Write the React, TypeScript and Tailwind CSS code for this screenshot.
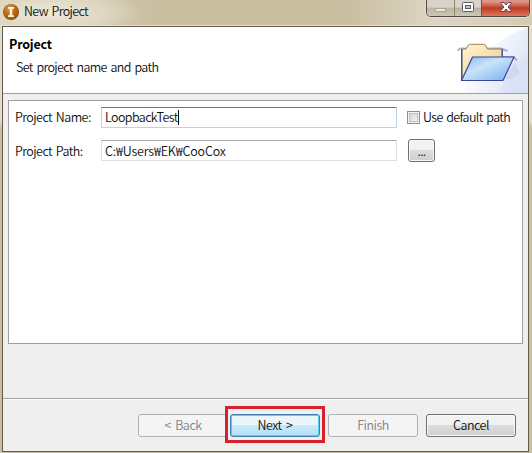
import type { ReactNode } from "react";

const font = "font-['Noto_Sans_CJK_KR','Noto_Sans',sans-serif] font-[350]";

function AppIcon() {
  return (
    <svg width="18" height="18" viewBox="0 0 18 18">
      <defs>
        <radialGradient id="orb" cx="40%" cy="30%" r="75%">
          <stop offset="0" stopColor="#d39a58" />
          <stop offset=".5" stopColor="#b96818" />
          <stop offset="1" stopColor="#8d4a0c" />
        </radialGradient>
      </defs>
      <circle cx="9" cy="9" r="8.1" fill="url(#orb)" />
      <path d="M6 4h6v1.8h-1.7v6.4H12V14H6v-1.8h1.7V5.8H6z" fill="#fff3d2" />
    </svg>
  );
}

function Folder() {
  return (
    <svg width="74" height="66" viewBox="454 27 74 66">
      <defs>
        <linearGradient id="sky" x1="0" y1="0" x2="1" y2="0.6">
          <stop offset="0" stopColor="#fff" />
          <stop offset=".5" stopColor="#f6f8fe" />
          <stop offset="1" stopColor="#dce3f8" />
        </linearGradient>
        <linearGradient id="flap" x1="0" y1="0" x2="1" y2="1">
          <stop offset="0" stopColor="#81b7ef" />
          <stop offset=".4" stopColor="#c9e3fa" />
          <stop offset="1" stopColor="#75aceb" />
        </linearGradient>
        <linearGradient id="paper" x1="0" y1="0" x2="1" y2="1">
          <stop offset="0" stopColor="#fff6d4" />
          <stop offset="1" stopColor="#ecc987" />
        </linearGradient>
      </defs>
      <path d="M528 27Q501 37 485 53Q468 73 464 93H528z" fill="url(#sky)" />
      <path d="M528 54Q507 67 500 93H528z" fill="#d4ddf7" opacity=".35" />
      <path d="M504 80l11-19 5 12-8 6z" fill="#8d91a8" opacity=".14" />
      <path d="M457.5 50.5l3-2h41l6 2.500M468 60l4-3h42l3 3.500" fill="none" stroke="#8791ae" strokeWidth="2" opacity=".65" />
      <path d="M462 80V49h4l2.500-4q.5-.7 2-.7h13q1.500 0 2 .7l2 4h14.500V58" fill="url(#paper)" stroke="#9b8250" />
      <path d="M461.700 80V49M502.300 49v8" stroke="#42469f" strokeWidth="1.200" />
      <path d="M472.500 57H514l-11 23.500h-41.500z" fill="url(#flap)" stroke="#3644a2" strokeWidth="1.200" strokeLinejoin="round" />
    </svg>
  );
}

function WindowControls() {
  return (
    <div className="flex h-[17px] w-[104px] shrink-0 overflow-hidden rounded-b-[5px] border border-t-0 border-[#504a42] shadow-[0_0_0_1px_#e5decb]">
      <div className="flex w-[28px] justify-center border-r border-[#8c8576] bg-linear-to-b from-[#d8d3c6] from-45% via-[#bdb6a5] via-50% to-[#cdc6b4] pt-2">
        <span className="h-[4px] w-[11px] border border-[#aaa494] bg-[#eeeae0]" />
      </div>
      <div className="flex w-[27px] justify-center border-r border-[#625a50] bg-linear-to-b from-[#d8d3c6] from-45% via-[#b8b1a0] via-50% to-[#cdc6b4] pt-[2px]">
        <svg width="12" height="10" viewBox="0 0 12 10">
          <rect x=".5" y=".5" width="11" height="9" rx="1" fill="#fff" stroke="#555b6d" />
          <rect x="3.5" y="3.5" width="5" height="3" fill="#c8c3b8" stroke="#555b6d" />
        </svg>
      </div>
      <div className="flex flex-1 justify-center bg-linear-to-b from-[#dc9688] from-10% via-[#bf3926] via-50% to-[#dc7757] pt-[2px]">
        <svg width="12" height="10" viewBox="0 0 12 10">
          <path d="M1 .5h3L6 3 8 .5h3v1L8 5l3 3.500v1H8L6 7 4 9.500H1v-1L4 5 1 1.500z" fill="#fff" stroke="#5a4654" />
        </svg>
      </div>
    </div>
  );
}

function FooterButton({ children, className }: { children: ReactNode; className: string }) {
  return (
    <button className={`flex h-[23px] w-[90px] shrink-0 items-center justify-center rounded-[3px] border pb-px text-[12.5px] leading-none tracking-[-0.45px] [word-spacing:2px] ${className}`}>
      {children}
    </button>
  );
}

export default function App() {
  return (
    <div className={`flex h-[453px] w-[532px] flex-col overflow-hidden bg-[#cbc0a0] text-[12.5px] leading-[18px] tracking-[-0.64px] text-[#111] [word-spacing:1.5px] ${font}`}>
      <div className="flex h-[25px] shrink-0 items-start bg-[radial-gradient(ellipse_95px_25px_at_48px_13px,#eee9dc_0%,#ded7c2_60%,transparent_100%),linear-gradient(90deg,#d9d1ba,#c9bea0_30%,#c9bea0_65%,#ddd6c5_82%,#d4cbb4)] pl-[2px] pr-[2px]">
        <div className="pt-[3px]"><AppIcon /></div>
        <span className="grow pl-[4px] pt-[2px]">New Project</span>
        <WindowControls />
      </div>
      <div className="flex min-h-0 grow border-t border-[#e8e2d2] bg-linear-to-b from-[#e2ddce] from-22% to-[#c8bfa5] to-24% pb-px pl-[2px] pr-[3px]">
        <div className="flex grow flex-col border border-[#625a4b] bg-[#efefef]">
          <div className="flex h-[67px] shrink-0 justify-between border-b border-[#a0a0a0] bg-white">
            <div className="pl-[6px] pt-[8px]">
              <h1 className="text-[12.5px] font-bold leading-[18px] tracking-[-0.2px] text-black">Project</h1>
              <p className="pl-[7px] pt-[5px]">Set project name and path</p>
            </div>
            <Folder />
          </div>
          <div className="mx-[5px] mt-[6px] h-[244px] shrink-0 border border-[#a0a0a0] bg-white pl-[6px] pt-[6px]">
            <div className="flex h-[21px] items-center">
              <label className="-mt-px w-[86px] shrink-0 tracking-[-0.56px]">Project Name:</label>
              <div className="flex h-[21px] w-[296px] shrink-0 items-center border border-[#b6d5e8] border-t-[#557ca5] pb-px pl-[3px]">
                <span className="tracking-[-0.6px]">LoopbackTest</span><span className="h-[15px] w-px bg-black" />
              </div>
              <span className="ml-[10px] flex h-[13px] w-[13px] shrink-0 border border-[#8d8d8d] bg-[#f5f5f5] p-px">
                <span className="grow border border-[#bcc0c5] bg-linear-to-br from-[#cdd1d6] to-[#f7f7f7]" />
              </span>
              <span className="-mt-[2px] whitespace-nowrap pl-[3px]">Use default path</span>
            </div>
            <div className="mt-[11px] flex h-[23px] items-center">
              <label className="w-[86px] shrink-0 tracking-[-0.56px]">Project Path:</label>
              <div className="flex h-[21px] w-[296px] shrink-0 items-center border border-[#dedfe3] border-t-[#a5a8af] pl-[3px] tracking-[-0.15px]">C:₩Users₩EK₩CooCox</div>
              <button className="ml-[11px] h-[23px] w-[27px] rounded-[3px] border border-[#707070] bg-linear-to-b from-[#f2f2f2] from-45% via-[#dddddd] via-50% to-[#cfcfcf] leading-[18px] shadow-[inset_0_0_0_1px_#f8f8f8]">...</button>
            </div>
          </div>
          <div className="mt-[54px] flex grow border-t border-[#a0a0a0] pl-[135px] shadow-[inset_0_1px_0_#fafafa]">
            <FooterButton className="mt-[15px] border-[#adb2b5] bg-[#f4f4f4] text-[#838383]">&lt; Back</FooterButton>
            <div className="-ml-[3px] mt-[7px] flex h-[37px] w-[100px] shrink-0 items-start justify-center border-3 border-[#d9212b] bg-[#efefef] pt-[5px]">
              <FooterButton className="border-[#3c7fb1] bg-linear-to-b from-[#eaf6fc] from-45% via-[#c9eafa] via-50% to-[#b3dff4] shadow-[inset_0_0_0_1px_#55cff4]">Next &gt;</FooterButton>
            </div>
            <FooterButton className="ml-[3px] mt-[15px] border-[#adb2b5] bg-[#f4f4f4] text-[#838383]">Finish</FooterButton>
            <FooterButton className="ml-[8px] mt-[15px] border-[#707070] bg-linear-to-b from-[#f2f2f2] from-45% via-[#dddddd] via-50% to-[#cfcfcf] shadow-[inset_0_0_0_1px_#f8f8f8]">Cancel</FooterButton>
          </div>
        </div>
      </div>
    </div>
  );
}
